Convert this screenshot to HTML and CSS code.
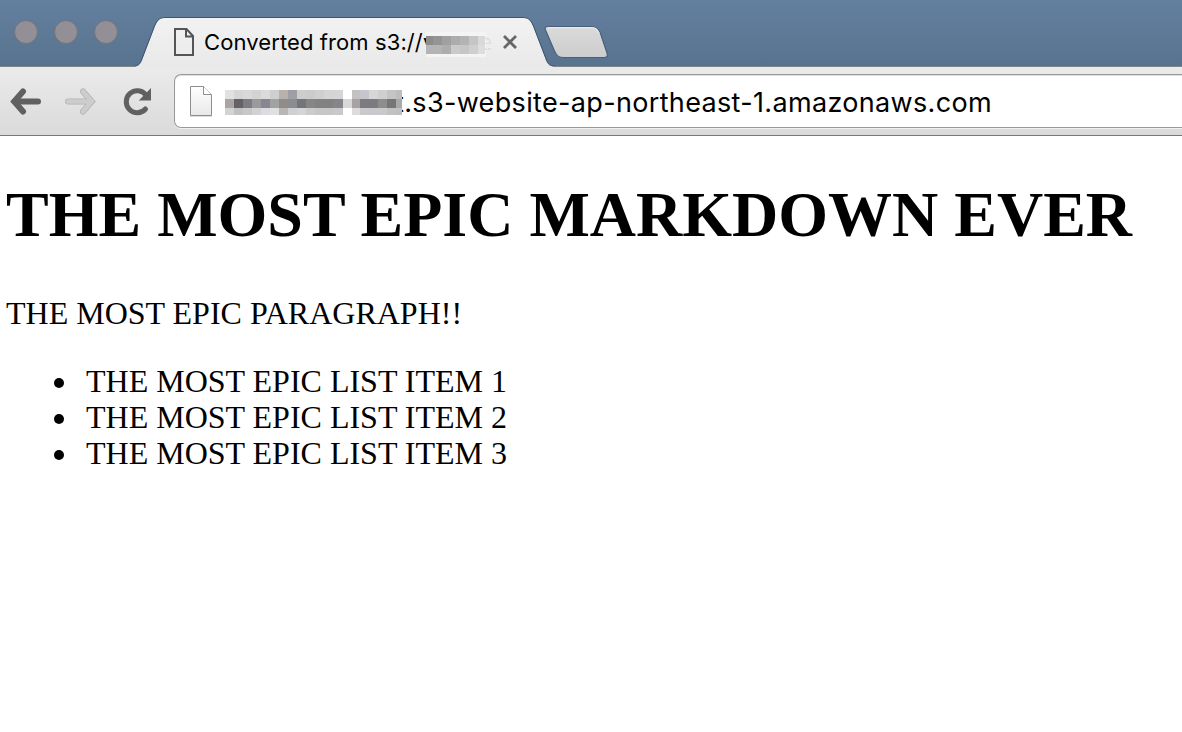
FILE: index.html
```
<!DOCTYPE html>
<html lang="en">
<head>
  <meta charset="utf-8">
  <title>Converted from s3://</title>
  <link rel="stylesheet" href="styles.css">
</head>
<body>
<div class="tabstrip">
  <div class="lights">
    <span class="light"></span>
    <span class="light"></span>
    <span class="light"></span>
  </div>
  <div class="tab">
    <svg class="tab-shape" width="422" height="52" viewBox="134 16 422 52">
      <defs>
        <linearGradient id="tabFill" x1="0" y1="0" x2="0" y2="1">
          <stop offset="0" stop-color="#f2f2f2"/>
          <stop offset="1" stop-color="#e9e9e9"/>
        </linearGradient>
      </defs>
      <path d="M134 68V66.500C138 66.500 140 64.500 142 60L155 26C158 19.500 160 17.500 166 17.500H522C528 17.500 530 19.500 533 26L546 60C548 64.500 550 66.500 555 66.500V68Z" fill="url(#tabFill)"/>
      <path d="M134 66C138 66 140 64 141.500 60L154.500 26C157.500 19 160 17.500 166 17.500H522C528 17.500 530.500 19 533.500 26L546.500 60C548 64 550 66 555 66" fill="none" stroke="#40566f" stroke-width="1"/>
    </svg>
    <svg class="tab-icon" width="20" height="28" viewBox="174 28 20 28">
      <path d="M175 29H186.500L193 36V55H175Z M186 29V36.500H193" fill="none" stroke="#555" stroke-width="2"/>
    </svg>
    <span class="tab-title">Converted from s3://v</span>
    <svg class="tab-mosaic" width="66" height="25" viewBox="426 32 66 25" shape-rendering="crispEdges">
      <rect x="426" y="32" width="60" height="25" fill="#f4f4f4"/>
      <rect x="426" y="36" width="7" height="9" fill="#8c8c8c"/>
      <rect x="433" y="36" width="9" height="9" fill="#949494"/>
      <rect x="442" y="36" width="9" height="9" fill="#a0a0a0"/>
      <rect x="451" y="36" width="9" height="9" fill="#acacac"/>
      <rect x="460" y="36" width="9" height="9" fill="#b3b3b3"/>
      <rect x="469" y="36" width="9" height="9" fill="#c5c5c5"/>
      <rect x="478" y="36" width="7" height="9" fill="#d9d9d9"/>
      <rect x="426" y="45" width="16" height="9" fill="#b4b4b4"/>
      <rect x="442" y="45" width="9" height="9" fill="#adadad"/>
      <rect x="451" y="45" width="9" height="9" fill="#cacaca"/>
      <rect x="460" y="45" width="9" height="9" fill="#c6c6c6"/>
      <rect x="469" y="45" width="9" height="9" fill="#cfcfcf"/>
      <rect x="478" y="45" width="7" height="9" fill="#dddddd"/>
      <path d="M485 38.500C489 38 490.500 41 490 43.500H485M485 49C487 50 489 49.500 490 48" fill="none" stroke="#dedede" stroke-width="1.500"/>
    </svg>
    <svg class="tab-close" width="16" height="16" viewBox="502 34 16 16">
      <path d="M504 36L516 48M516 36L504 48" stroke="#666" stroke-width="2.800"/>
    </svg>
  </div>
  <svg class="new-tab" width="66" height="34" viewBox="543 25 66 34">
    <defs>
      <linearGradient id="newTabFill" x1="0" y1="0" x2="0" y2="1">
        <stop offset="0" stop-color="#dadada"/>
        <stop offset="1" stop-color="#cdcdcd"/>
      </linearGradient>
    </defs>
    <path d="M548 26.500H591C596 26.500 598 28 600 32L607 53C608 56 607 57.500 604 57.500H564C559 57.500 556.500 56 554.500 51L545.500 30C544.500 28 545 26.500 548 26.500Z" fill="url(#newTabFill)" stroke="#475f7b" stroke-width="1.200"/>
    <path d="M548 27.700H591C595 27.700 597 29 599 33" fill="none" stroke="#eee"/>
  </svg>
</div>
<div class="toolbar">
  <svg class="nav-icons" width="144" height="30" viewBox="9 87 144 30">
    <g fill="none" stroke="#606060" stroke-width="6" stroke-linecap="round">
      <path d="M23 91.500L14.200 101.500L23 111.500"/>
      <path d="M16 101.500H38"/>
    </g>
    <g fill="none" stroke="#b2b2b2" stroke-width="6" stroke-linecap="round">
      <path d="M83 91.500L91.800 101.500L83 111.500"/>
      <path d="M68 101.500H90"/>
    </g>
    <g fill="none" stroke="#cdcdcd" stroke-width="4.500" stroke-linecap="round">
      <path d="M83 91.500L91.800 101.500L83 111.500"/>
      <path d="M68 101.500H90"/>
    </g>
    <path d="M145.500 109A11 11 0 1 1 146 95" fill="none" stroke="#606060" stroke-width="5" stroke-linecap="round"/>
    <path d="M151 88V100.500H138.800Z" fill="#606060"/>
  </svg>
  <div class="omnibox">
    <svg class="page-icon" width="24" height="32" viewBox="189 85 24 32">
      <defs>
        <linearGradient id="pageFill" x1="0" y1="0" x2="0" y2="1">
          <stop offset="0" stop-color="#fff"/>
          <stop offset="1" stop-color="#e8e8ea"/>
        </linearGradient>
      </defs>
      <path d="M190.500 86.500H203.500L211.500 94.500V115.500H190.500Z" fill="url(#pageFill)" stroke="#8e8e8e"/>
      <path d="M203.500 86.500V94.500H211.500" fill="#fff" stroke="#8e8e8e"/>
      <path d="M190 116.500H212" stroke="#ddd"/>
    </svg>
    <svg class="url-mosaic" width="177" height="25" viewBox="0 0 177 25" shape-rendering="crispEdges">
      <rect x="0" y="0" width="9" height="9" fill="#e1e1e1"/>
      <rect x="9" y="0" width="9" height="9" fill="#d6d6d6"/>
      <rect x="18" y="0" width="9" height="9" fill="#d9d9d9"/>
      <rect x="27" y="0" width="9" height="9" fill="#d2d3d2"/>
      <rect x="36" y="0" width="9" height="9" fill="#dbdbdb"/>
      <rect x="45" y="0" width="9" height="9" fill="#cfcfcf"/>
      <rect x="54" y="0" width="9" height="9" fill="#b8b2af"/>
      <rect x="63" y="0" width="9" height="9" fill="#9d9fa5"/>
      <rect x="72" y="0" width="9" height="9" fill="#cdcdce"/>
      <rect x="81" y="0" width="9" height="9" fill="#cacccc"/>
      <rect x="90" y="0" width="9" height="9" fill="#cfcfcf"/>
      <rect x="99" y="0" width="19" height="9" fill="#d5d5d5"/>
      <rect x="127" y="0" width="8" height="9" fill="#c3c1c2"/>
      <rect x="135" y="0" width="9" height="9" fill="#c6c7cd"/>
      <rect x="144" y="0" width="9" height="9" fill="#d7d7da"/>
      <rect x="153" y="0" width="9" height="9" fill="#cfcfcf"/>
      <rect x="162" y="0" width="9" height="9" fill="#c5c4c4"/>
      <rect x="171" y="0" width="6" height="9" fill="#bdbdbd"/>
      <rect x="0" y="9" width="9" height="9" fill="#aaa5a3"/>
      <rect x="9" y="9" width="9" height="9" fill="#636266"/>
      <rect x="18" y="9" width="9" height="9" fill="#7d7c82"/>
      <rect x="27" y="9" width="9" height="9" fill="#989a9c"/>
      <rect x="36" y="9" width="9" height="9" fill="#888790"/>
      <rect x="45" y="9" width="9" height="9" fill="#a0a2a3"/>
      <rect x="54" y="9" width="9" height="9" fill="#918b8b"/>
      <rect x="63" y="9" width="9" height="9" fill="#8b8c90"/>
      <rect x="72" y="9" width="9" height="9" fill="#747579"/>
      <rect x="81" y="9" width="9" height="9" fill="#868688"/>
      <rect x="90" y="9" width="18" height="9" fill="#828281"/>
      <rect x="108" y="9" width="10" height="9" fill="#86858a"/>
      <rect x="118" y="9" width="9" height="9" fill="#d8d8d8"/>
      <rect x="127" y="9" width="8" height="9" fill="#a6a3a2"/>
      <rect x="135" y="9" width="18" height="9" fill="#7b7b80"/>
      <rect x="153" y="9" width="9" height="9" fill="#8d8d8b"/>
      <rect x="162" y="9" width="9" height="9" fill="#777675"/>
      <rect x="171" y="9" width="6" height="9" fill="#a8aaa9"/>
      <rect x="0" y="18" width="9" height="7" fill="#d3d3d3"/>
      <rect x="9" y="18" width="9" height="7" fill="#c1c0c2"/>
      <rect x="18" y="18" width="9" height="7" fill="#c8c8ca"/>
      <rect x="27" y="18" width="9" height="7" fill="#d2d2d5"/>
      <rect x="36" y="18" width="9" height="7" fill="#dcdce2"/>
      <rect x="45" y="18" width="9" height="7" fill="#e0e0e0"/>
      <rect x="54" y="18" width="9" height="7" fill="#b9b6b4"/>
      <rect x="63" y="18" width="9" height="7" fill="#d0d0d2"/>
      <rect x="72" y="18" width="9" height="7" fill="#d5d5d6"/>
      <rect x="81" y="18" width="9" height="7" fill="#cccccd"/>
      <rect x="90" y="18" width="18" height="7" fill="#c6c7c6"/>
      <rect x="108" y="18" width="10" height="7" fill="#c9c8ca"/>
      <rect x="127" y="18" width="8" height="7" fill="#dddcdc"/>
      <rect x="135" y="18" width="9" height="7" fill="#cac9cc"/>
      <rect x="144" y="18" width="18" height="7" fill="#c8c9cc"/>
      <rect x="162" y="18" width="9" height="7" fill="#c4c2c1"/>
      <rect x="171" y="18" width="6" height="7" fill="#bfc0c0"/>
    </svg>
    <span class="url">t.s3-website-ap-northeast-1.amazonaws.com</span>
  </div>
</div>
<div class="page">
  <h1>THE MOST EPIC MARKDOWN EVER</h1>
  <p>THE MOST EPIC PARAGRAPH!!</p>
  <ul>
    <li>THE MOST EPIC LIST ITEM 1</li>
    <li>THE MOST EPIC LIST ITEM 2</li>
    <li>THE MOST EPIC LIST ITEM 3</li>
  </ul>
</div>
</body>
</html>
```
FILE: styles.css
```
* {
  box-sizing: border-box;
}

body {
  margin: 0;
  height: 732px;
  overflow: hidden;
  background: #fff;
  color: #000;
}

svg {
  display: block;
  flex: none;
}

.tabstrip {
  display: flex;
  height: 67px;
  background: linear-gradient(#64809f, #58738f);
  border-bottom: 1px solid #80858c;
}

.lights {
  display: flex;
  gap: 16px;
  width: 134px;
  padding: 20px 0 0 14px;
}

.light {
  width: 24px;
  height: 24px;
  border: 1px solid #747379;
  border-radius: 50%;
  background: #929096;
}

.tab {
  position: relative;
  display: flex;
  width: 409px;
  height: 68px;
  padding: 28px 0 0 40px;
}

/* sits behind the title and covers the strip border */
.tab-shape {
  position: absolute;
  left: 0;
  top: 16px;
}

.tab-icon,
.tab-close {
  position: relative;
}

.tab-title {
  position: relative;
  width: 222px;
  margin-left: 10px;
  font: 22px/28px Inter, sans-serif;
  letter-spacing: 0.1px;
  white-space: nowrap;
}

.tab-mosaic {
  position: relative;
  margin-top: 4px;
}

.tab-close {
  margin: 6px 0 0 10px;
}

.new-tab {
  margin-top: 25px;
}

.toolbar {
  display: flex;
  height: 69px;
  padding: 7px 0 0 9px;
  background: linear-gradient(#ebebeb, #dadada);
  border-bottom: 1px solid #777;
}

.nav-icons {
  margin-top: 13px;
}

.omnibox {
  display: flex;
  flex: 1;
  height: 54px;
  margin-left: 21px;
  padding-left: 14px;
  border: 1px solid #999;
  border-right: 0;
  border-radius: 7px 0 0 7px;
  background: #fff;
  box-shadow: 0 1px 0 #f0f0f0, inset 0 1px 1px #ddd;
}

.page-icon {
  margin-top: 10px;
}

.url-mosaic {
  position: relative;
  z-index: 1;
  margin: 15px 0 0 12px;
}

.url {
  margin-left: -7px;
  padding-top: 1px;
  font: 27px/54px Inter, sans-serif;
  letter-spacing: 0.34px;
  white-space: nowrap;
}

.page {
  padding: 0 6px;
  font: 32px/36px "Liberation Serif", serif;
}

h1 {
  margin: 42px 0 43px;
  font-size: 64px;
  line-height: 74px;
  white-space: nowrap;
}

p {
  margin: 0 0 32px;
}

ul {
  margin: 0;
  padding-left: 48px;
  list-style: none;
}

li {
  display: flex;
  align-items: center;
}

li::before {
  content: "";
  width: 10px;
  height: 10px;
  margin: 4px 22px 0 0;
  border-radius: 50%;
  background: #000;
}
```
